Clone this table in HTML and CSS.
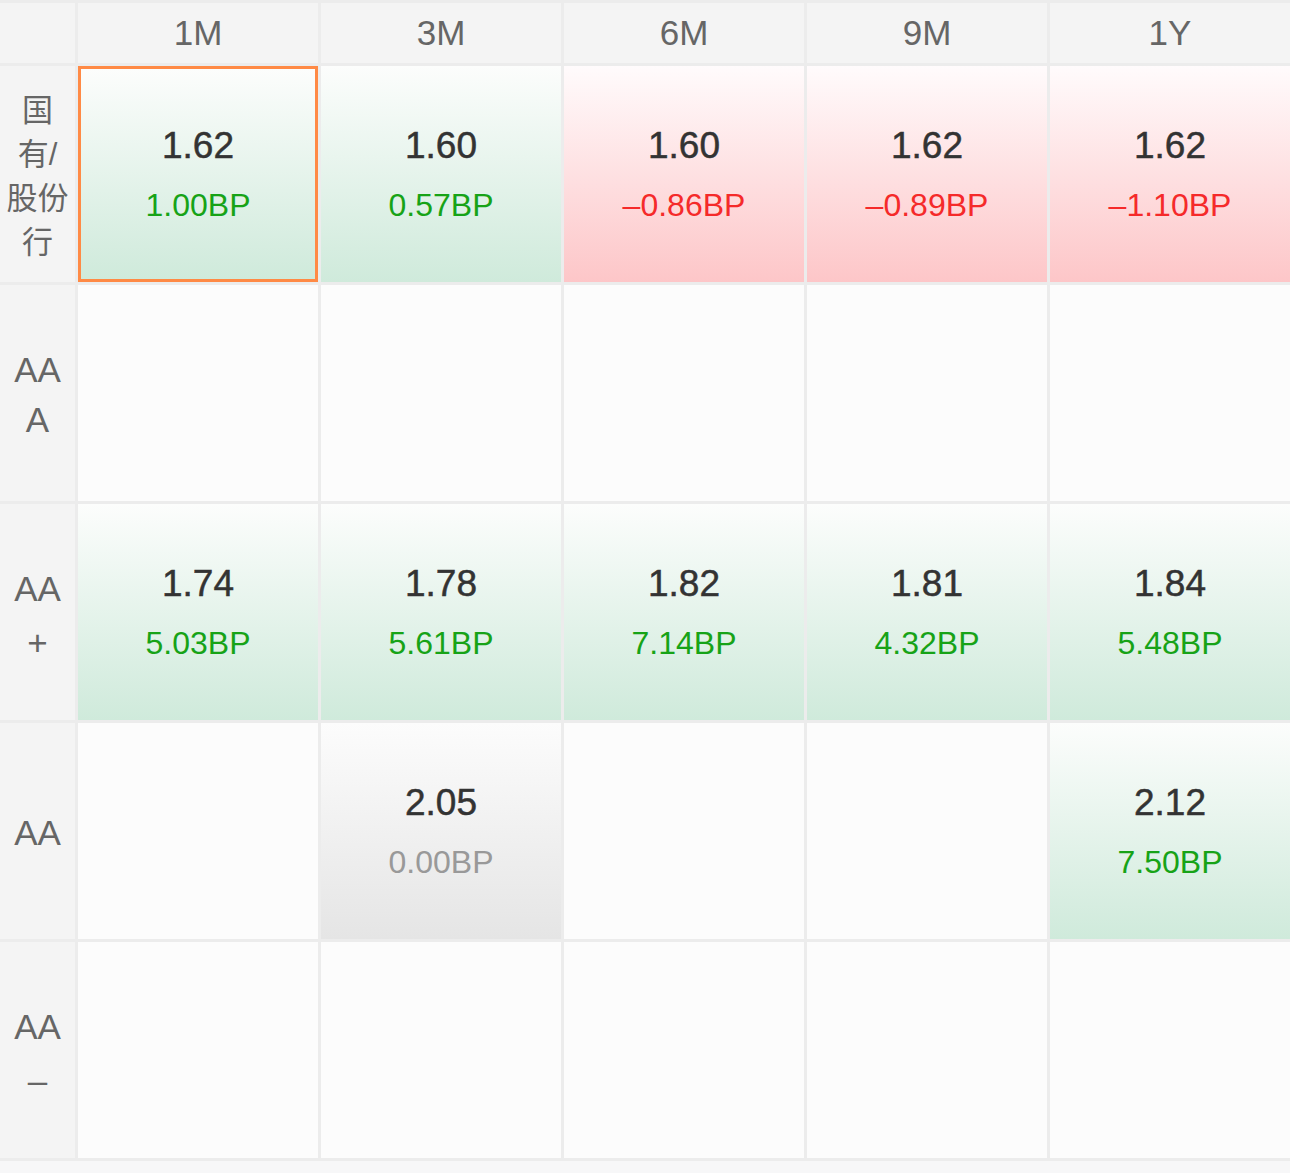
FILE: index.html
```html
<!DOCTYPE html>
<html lang="zh-CN">
<head>
<meta charset="utf-8">
<title>利率矩阵</title>
<link rel="stylesheet" href="styles.css">
</head>
<body>
<div class="matrix">
  <div class="head corner"></div>
  <div class="head">1M</div>
  <div class="head">3M</div>
  <div class="head">6M</div>
  <div class="head">9M</div>
  <div class="head">1Y</div>

  <div class="label cn"><div class="label-text">国<br>有/<br>股份<br>行</div></div>
  <div class="cell up selected"><span class="val">1.62</span><span class="bp pos">1.00BP</span></div>
  <div class="cell up"><span class="val">1.60</span><span class="bp pos">0.57BP</span></div>
  <div class="cell down"><span class="val">1.60</span><span class="bp neg">–0.86BP</span></div>
  <div class="cell down"><span class="val">1.62</span><span class="bp neg">–0.89BP</span></div>
  <div class="cell down"><span class="val">1.62</span><span class="bp neg">–1.10BP</span></div>

  <div class="label"><div class="label-text">AA<br>A</div></div>
  <div class="cell"></div>
  <div class="cell"></div>
  <div class="cell"></div>
  <div class="cell"></div>
  <div class="cell"></div>

  <div class="label"><div class="label-text">AA<br><span class="sign">+</span></div></div>
  <div class="cell up"><span class="val">1.74</span><span class="bp pos">5.03BP</span></div>
  <div class="cell up"><span class="val">1.78</span><span class="bp pos">5.61BP</span></div>
  <div class="cell up"><span class="val">1.82</span><span class="bp pos">7.14BP</span></div>
  <div class="cell up"><span class="val">1.81</span><span class="bp pos">4.32BP</span></div>
  <div class="cell up"><span class="val">1.84</span><span class="bp pos">5.48BP</span></div>

  <div class="label"><div class="label-text">AA</div></div>
  <div class="cell"></div>
  <div class="cell flat"><span class="val">2.05</span><span class="bp zero">0.00BP</span></div>
  <div class="cell"></div>
  <div class="cell"></div>
  <div class="cell up"><span class="val">2.12</span><span class="bp pos">7.50BP</span></div>

  <div class="label"><div class="label-text">AA<br><span class="sign">–</span></div></div>
  <div class="cell"></div>
  <div class="cell"></div>
  <div class="cell"></div>
  <div class="cell"></div>
  <div class="cell"></div>
</div>
</body>
</html>
```

FILE: styles.css
```css
html, body {
  margin: 0;
  padding: 0;
}

body {
  background: #f7f7f8;
  font-family: "Liberation Sans", "Noto Sans CJK SC", sans-serif;
  height: 1173px;
  overflow: hidden;
}

.matrix {
  display: grid;
  grid-template-columns: 75px repeat(5, 240px);
  grid-template-rows: 60px repeat(5, 216px);
  gap: 3px;
  padding: 3px 0;
  background: #ececec;
  width: 1290px;
}

.head {
  background: #f4f4f4;
  color: #666;
  font-size: 35px;
  display: flex;
  align-items: center;
  justify-content: center;
}

.label {
  background: #f4f4f4;
  color: #666;
  font-size: 35px;
  line-height: 50px;
  display: flex;
  align-items: center;
  justify-content: center;
  text-align: center;
  padding-top: 4px;
  box-sizing: border-box;
}

.label-text {
  display: block;
}

.label .sign {
  position: relative;
  top: 4px;
}

.label.cn {
  font-size: 31px;
  line-height: 44px;
  padding-top: 6px;
}

.cell {
  background: #fcfcfc;
  display: flex;
  flex-direction: column;
  align-items: center;
  justify-content: center;
  box-sizing: border-box;
}

.cell.up {
  background: linear-gradient(to bottom, #fcfdfc 0%, #cfeadb 100%);
}

.cell.down {
  background: linear-gradient(to bottom, #fffbfc 0%, #fdc6c8 100%);
}

.cell.flat {
  background: linear-gradient(to bottom, #fcfcfc 0%, #e5e5e5 100%);
}

.cell.selected {
  border: 3px solid #ff8a45;
}

.val {
  font-size: 37px;
  color: #333;
  line-height: 44px;
  -webkit-text-stroke: 0.5px #333;
}

.bp {
  font-size: 32px;
  line-height: 40px;
  margin-top: 17px;
}

.bp.pos { color: #17a317; }
.bp.neg { color: #f52a2a; }
.bp.zero { color: #999; }
```
